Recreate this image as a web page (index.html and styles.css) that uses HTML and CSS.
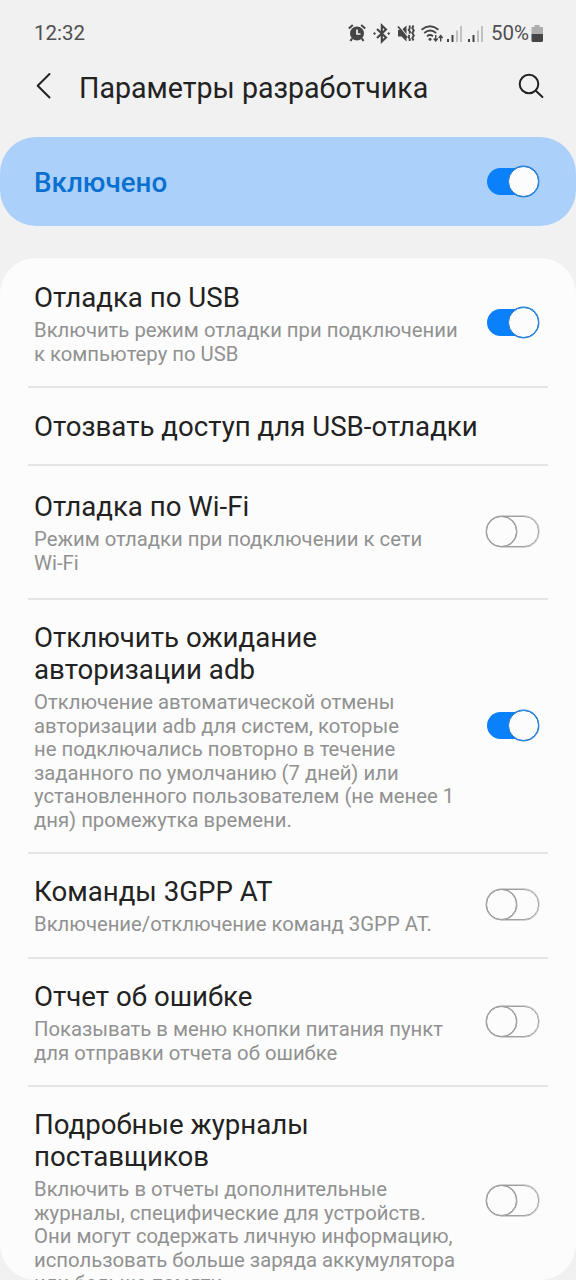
FILE: index.html
```html
<!DOCTYPE html>
<html lang="ru">
<head>
<meta charset="utf-8">
<title>Параметры разработчика</title>
<link rel="stylesheet" href="styles.css">
</head>
<body>
<div class="screen">
  <div class="status">
    <span class="clock">12:32</span>
    <svg class="status-icons" width="140" height="24" viewBox="0 0 140 24">
      <g fill="none" stroke="#454545">
        <circle cx="12" cy="12.500" r="7" fill="#454545" stroke="none"/>
        <path d="M12 8.500v4.500h3.500" stroke="#f1f1f1" stroke-width="1.700"/>
        <path d="M3.800 7.500l4-3.500M20.200 7.500l-4-3.500" stroke-width="2"/>
        <path d="M7 17.500l-1.500 2.500M17 17.500l1.500 2.500" stroke-width="2.200"/>
        <path d="M32 8l9 8.500-4.200 4V4.500l4.200 4-9 8.500" stroke-width="2.100"/>
        <path d="M29.500 11l1.500 1.500-1.500 1.500-1.500-1.500zM43.700 11l1.500 1.500-1.500 1.500-1.500-1.500z" fill="#454545" stroke="none"/>
        <path d="M53 9h3.500l5-4.500v16l-5-5H53z" fill="#454545" stroke="none"/>
        <path d="M52.500 3.500l11 13" stroke="#f1f1f1" stroke-width="1.300"/>
        <path d="M53 5.500l9 11" stroke-width="1.700"/>
        <path d="M64.700 4.500v3l-1 1.500 1.500 2-1 1.500M68.500 4.500l-1.200 2.500 1.500 2.500-1.500 2.500 1.500 2.500-1.500 2.500 1.200 2.500M64.500 14l-1 2 1.200 2v2" stroke-width="1.900"/>
        <path d="M76.500 8.700q8.500-7 17 0M79.200 12q6-5 12 0M82 15.200q3-2.500 6 0" stroke-width="1.800"/>
        <circle cx="85" cy="18.300" r="1.500" fill="#454545" stroke="none"/>
        <path d="M90.700 14v6M88.700 17.500l2 2.500 2-2.500M95.700 20.500v-6M93.700 17l2-2.500 2 2.500" stroke-width="1.400"/>
      </g>
      <g fill="#454545">
        <path d="M102 18h2v3h-2zM106.500 14h2v7h-2zM123 18h2v3h-2zM127.500 14h2v7h-2z"/>
        <path d="M111 9.500h2V21h-2zM115 5h2v16h-2zM132 9.500h2V21h-2zM136 5h2v16h-2z" fill="#c1c1c1"/>
      </g>
    </svg>
    <span class="percent">50%</span>
    <svg class="battery" width="12" height="24" viewBox="0 0 12 24">
      <path d="M3.500 4h5v2H12v7H.500V6h3z" fill="#adadad"/>
      <path d="M.500 13H12v6.500q0 1.500-1.500 1.500H2Q.500 21 .500 19.500z" fill="#454545"/>
    </svg>
  </div>

  <header class="header">
    <svg class="back" width="20" height="30" viewBox="0 0 20 30"><path d="M15.500 3L3.700 14.700 15.500 26.500" fill="none" stroke="#222" stroke-width="2" stroke-linecap="round" stroke-linejoin="round"/></svg>
    <h1 class="heading">Параметры разработчика</h1>
    <svg class="search" width="28" height="28" viewBox="0 0 28 28"><g fill="none" stroke="#222" stroke-width="2" stroke-linecap="round"><circle cx="11" cy="11" r="9.300"/><path d="M17.800 17.800l6.600 6.200"/></g></svg>
  </header>

  <section class="master">
    <span class="master-label">Включено</span>
    <span class="toggle on"><span class="thumb"></span></span>
  </section>

  <main class="card">
    <div class="row r-usb">
      <div class="text"><div class="title">Отладка по USB</div><div class="desc">Включить режим отладки при подключении<br>к компьютеру по USB</div></div>
      <span class="toggle on"><span class="thumb"></span></span>
    </div>
    <div class="row r-revoke">
      <div class="text"><div class="title">Отозвать доступ для USB-отладки</div></div>
    </div>
    <div class="row r-wifi">
      <div class="text"><div class="title">Отладка по Wi-Fi</div><div class="desc">Режим отладки при подключении к сети<br>Wi-Fi</div></div>
      <span class="toggle"><span class="thumb"></span></span>
    </div>
    <div class="row r-adb">
      <div class="text"><div class="title">Отключить ожидание<br>авторизации adb</div><div class="desc">Отключение автоматической отмены<br>авторизации adb для систем, которые<br>не подключались повторно в течение<br>заданного по умолчанию (7 дней) или<br>установленного пользователем (не менее 1<br>дня) промежутка времени.</div></div>
      <span class="toggle on"><span class="thumb"></span></span>
    </div>
    <div class="row r-at">
      <div class="text"><div class="title">Команды 3GPP AT</div><div class="desc">Включение/отключение команд 3GPP AT.</div></div>
      <span class="toggle"><span class="thumb"></span></span>
    </div>
    <div class="row r-bug">
      <div class="text"><div class="title">Отчет об ошибке</div><div class="desc">Показывать в меню кнопки питания пункт<br>для отправки отчета об ошибке</div></div>
      <span class="toggle"><span class="thumb"></span></span>
    </div>
    <div class="row r-logs">
      <div class="text"><div class="title">Подробные журналы<br>поставщиков</div><div class="desc">Включить в отчеты дополнительные<br>журналы, специфические для устройств.<br>Они могут содержать личную информацию,<br>использовать больше заряда аккумулятора<br>или больше памяти.</div></div>
      <span class="toggle"><span class="thumb"></span></span>
    </div>
  </main>
</div>
</body>
</html>
```
FILE: styles.css
```css
* { box-sizing: border-box; }
body { margin: 0; background: #f1f1f1; font-family: Roboto, "Noto Sans", sans-serif; color: #222; }
.screen { width: 576px; height: 1280px; overflow: hidden; display: flex; flex-direction: column; }

.status { height: 52px; flex: none; display: flex; align-items: center; padding: 14px 33px 1px 34px; color: #505050; font-size: 20.5px; line-height: 36px; }
.clock { flex: 1; }
.status-icons { margin-right: 6px; }
.percent { width: 40px; white-space: nowrap; }
.battery { flex: none; }

.header { height: 85px; flex: none; display: flex; align-items: center; padding: 0 30px 14px 34px; }
.back { margin-top: -3px; }
.heading { flex: 1; margin: 0 0 0 25px; font-size: 28.6px; font-weight: 400; line-height: 36px; white-space: nowrap; }
.search { margin-top: -1px; }

.master { height: 89px; flex: none; margin-bottom: 32px; border-radius: 36px; background: #abd1fa; display: flex; align-items: center; justify-content: space-between; padding: 0 37px 0 34px; }
.master-label { color: #0a70d0; font-size: 27.8px; font-weight: 500; padding-top: 1px; }

.card { flex: 1; min-height: 0; overflow: hidden; border-radius: 36px; background: #fcfcfc; padding: 0 28px; }
.row { display: flex; align-items: center; justify-content: space-between; padding: 0 9px 0 6px; border-bottom: 2px solid #e5e5e5; }
.text { white-space: nowrap; padding-top: 2px; }
.title { font-size: 27.65px; line-height: 32.5px; }
.desc { margin-top: 4.5px; font-size: 20.3px; line-height: 23.5px; color: #919191; }
.r-usb { height: 130px; }
.r-usb .text { padding-top: 4px; }
.r-revoke { height: 78px; }
.r-wifi { height: 134px; }
.r-adb { height: 254px; }
.r-at { height: 105px; }
.r-bug { height: 128px; }
.r-logs { height: 230px; border: 0; }
.r-logs .text { padding-top: 0; }

.toggle { position: relative; flex: none; width: 53px; height: 32px; display: flex; align-items: center; }
.toggle::before { content: ""; width: 48px; height: 29px; margin-left: 4px; border: 1.5px solid #a0a0a0; border-radius: 15px; box-shadow: 0 0 0 0.4px #a8a8a8; }
.thumb { position: absolute; left: 0; top: 0.5px; width: 31px; height: 31px; border: 1.5px solid #999; border-radius: 50%; background: #fcfcfc; box-shadow: 0 0 0 0.4px #a0a0a0; }
.on::before { width: 48px; height: 27px; margin-left: 1px; border: 0; background: #0a80fb; box-shadow: none; }
.on .thumb { left: 21.5px; border-color: #1e7bd6; box-shadow: 0 0 0 0.4px #1e7bd6; }
.r-wifi .toggle, .r-adb .toggle, .r-at .toggle, .r-bug .toggle { margin-bottom: 2px; }
.r-logs .toggle { margin-bottom: 4px; }
```
